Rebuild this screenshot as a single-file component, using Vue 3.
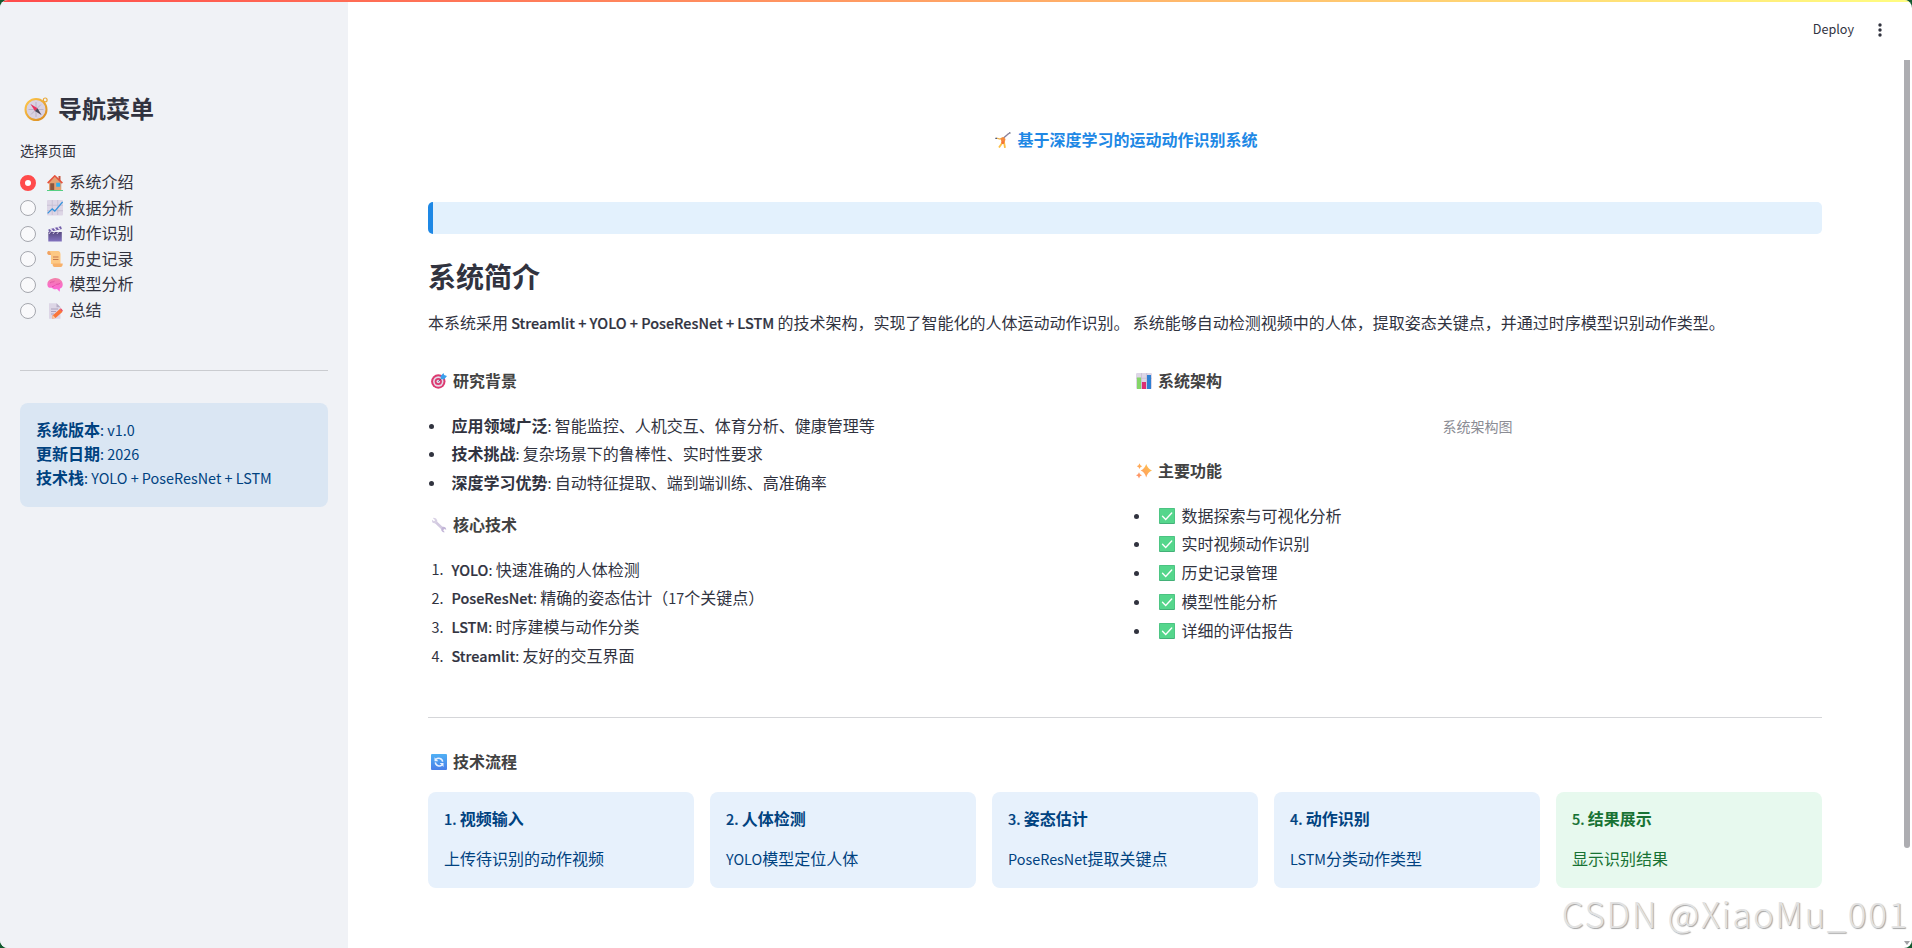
<template>
    <div class="app">
        <!-- icon sprite -->
        <svg class="sprite" width="0" height="0">
            <defs>
                <linearGradient id="gGold" x1="0" y1="0" x2="1" y2="1">
                    <stop offset="0" stop-color="#ffc94d" />
                    <stop offset="1" stop-color="#d98a1f" />
                </linearGradient>
                <linearGradient id="gPink" x1="0" y1="0" x2="0" y2="1">
                    <stop offset="0" stop-color="#f283a8" />
                    <stop offset="1" stop-color="#ff5fe0" />
                </linearGradient>
                <linearGradient id="gPurple" x1="0" y1="0" x2="0" y2="1">
                    <stop offset="0" stop-color="#584a80" />
                    <stop offset="1" stop-color="#8272c0" />
                </linearGradient>
                <linearGradient id="gSpark" x1="0" y1="1" x2="1" y2="0">
                    <stop offset="0" stop-color="#ff8a6a" />
                    <stop offset="1" stop-color="#ffc94a" />
                </linearGradient>
                <linearGradient id="gBlue" x1="0" y1="0" x2="0" y2="1">
                    <stop offset="0" stop-color="#4fb0f5" />
                    <stop offset="1" stop-color="#4a7fe8" />
                </linearGradient>
                <symbol id="compass" viewBox="0 0 24 24">
                    <circle cx="21.2" cy="2.9" r="1.9" fill="none" stroke="#e9a93a" stroke-width="1.2" />
                    <circle cx="12" cy="12.5" r="10.5" fill="#d9d2e2" stroke="url(#gGold)" stroke-width="2" />
                    <path d="M12 5v15M4.5 12.5h15M7 7.5l10 10M17 7.5l-10 10" stroke="#b4aac2" stroke-width=".8" />
                    <path d="M6.5 7l7 4.2-2.6 2.7z" fill="#e8325e" />
                    <path d="M17.5 18l-6.6-4.1 2.6-2.7z" fill="#4b4658" />
                </symbol>
                <symbol id="home" viewBox="0 0 16 16">
                    <path d="M11.5 1h2v5h-2z" fill="#c4553f" />
                    <path d="M2 7l6-5 6.3 5v8H2z" fill="#e3a274" />
                    <path d="M.7 8.2L7.8 1l7.6 7.2" fill="none" stroke="#e5533d" stroke-width="1.7" />
                    <path d="M3.2 8.3h4V15h-4z" fill="#8a563f" />
                    <path d="M9.2 7.8h4v4h-4z" fill="#2fb0ee" />
                    <path d="M0 15h16v1H0z" fill="#55cf83" />
                </symbol>
                <symbol id="trend" viewBox="0 0 16 16">
                    <rect width="16" height="15.5" rx="1" fill="#ddd6e6" />
                    <path d="M5.3 0v15M10.7 0v15M0 5.3h16M0 10.7h16" stroke="#c3bad0" stroke-width=".7" />
                    <path d="M.6 13.4l4.6-4.5 2.6 2.2L15.6 2" fill="none" stroke="#3694dc" stroke-width="1.3" />
                </symbol>
                <symbol id="clapper" viewBox="0 0 16 16">
                    <path d="M1.3 3.4L14 .3l.8 2.7L2 6z" fill="#6f5ca8" />
                    <path d="M3.4 3l2.2 2M7 2.1l2.2 2M10.7 1.2l2.2 2" stroke="#eee6f5" stroke-width="1.4" />
                    <path d="M1.3 6h13.5v9.6H1.3z" fill="url(#gPurple)" />
                    <path d="M3.5 6l-1.6 2M7.5 6L5.9 8M11.5 6L9.9 8" stroke="#d7cce9" stroke-width="1" />
                </symbol>
                <symbol id="scroll" viewBox="0 0 16 16">
                    <path d="M1.5 0h10Q13.5.5 13.5 3v10H4V4H2Q.3 3.5.3 2 .3.3 1.5 0z" fill="#fdc884" />
                    <path d="M1.5 0Q3.5.3 4 4H2Q.3 3.5.3 2 .3.3 1.5 0z" fill="#f0a264" />
                    <path d="M5.5 12.5h10.2Q15.8 15.8 13.6 16H7.5Q5.5 15.7 5.5 12.5z" fill="#f7b06a" />
                    <path d="M6 6h5.5M6 8.5h5.5" stroke="#c8794e" stroke-width="1" />
                </symbol>
                <symbol id="brain" viewBox="0 0 16 16">
                    <path d="M.4 8C0 5 2 2.500 5 1.800 8 .4 11.700 1.200 13.500 3c2 1.300 2.600 4 2 6-.4 1.800-1.500 2.300-2.600 2.600l-.2 3.100-2.700-2.800C7.500 12.600 6 12 4.700 10.700 2.500 11.300.6 10.300.4 8z" fill="url(#gPink)" />
                    <path d="M3 6c2-1.800 3-.4 4.500-1.800M8.500 8c1.500-1.600 3.500 0 4.700-2M5 9.500c1.200.3 2-.5 2.700-1.400" fill="none" stroke="#d9479b" stroke-width=".8" />
                </symbol>
                <symbol id="memo" viewBox="0 0 16 16">
                    <path d="M2 .3h7.500l4 4V15.700H2z" fill="#ddd6e6" />
                    <path d="M9.500.3v4h4" fill="#b8aec6" />
                    <path d="M4 6h7M4 8.500h5M4 11h3" stroke="#a79cb8" stroke-width=".9" />
                    <path d="M5 15.600l.9-3.300 7-6.300 2.700 2.700-7 6.300z" fill="#f9753a" />
                    <path d="M5 15.600l.9-3.300 2.600 2.600z" fill="#f8c9a0" />
                    <path d="M12.900 6l1-.8 2 2.200-.9 1z" fill="#e8405f" />
                </symbol>
                <symbol id="cartwheel" viewBox="0 0 16 16">
                    <path d="M1.5 6.2L5 7l3-1.5" fill="none" stroke="#f0b34e" stroke-width="1.2" />
                    <path d="M.3 6.300h1.700M14 .8l1.500.3" stroke="#555a75" stroke-width="1.2" />
                    <path d="M8.500 6L14 1.300" stroke="#8b819b" stroke-width="1.4" />
                    <path d="M5.500 6.500l3-1.500 2 2-1 4.500-2.500.5z" fill="#f58a3e" />
                    <path d="M7.500 10.500L4 15.500M9 10l1 5.800" stroke="#fbbf45" stroke-width="1.8" />
                    <circle cx="7.800" cy="10.500" r="1.500" fill="#f4743b" />
                </symbol>
                <symbol id="target" viewBox="0 0 16 16">
                    <circle cx="7.3" cy="8.5" r="7.2" fill="#dc3a70" />
                    <circle cx="7.3" cy="8.5" r="5.2" fill="#e6d9e8" />
                    <circle cx="7.3" cy="8.5" r="3.6" fill="#dc3a70" />
                    <circle cx="7.3" cy="8.5" r="1.8" fill="#e6d9e8" />
                    <path d="M7.3 8.5L12 4" stroke="#5b4b78" stroke-width="1" />
                    <path d="M9.5 3.2L12.4.1l.8 2 2.8.9L13 6.500l-3-.6z" fill="#3b9fec" />
                </symbol>
                <symbol id="wrench" viewBox="0 0 16 16">
                    <path d="M3.500 4L12.500 12.500" stroke="#d2c9e0" stroke-width="2.6" />
                    <path d="M1.800.9L4.200 3.200 3.300 4.400 1 2.800Q.6 6.300 3.500 6.300 6.500 6.500 6.300 3.500 5.500.3 1.800.9z" fill="#d8d0e4" />
                    <path d="M11.500 9.800Q15 9.300 15.300 12.800L13 12l-.8 1.200 1.600 2.100Q10.500 15.500 10.200 12.500z" fill="#c3b6d8" />
                </symbol>
                <symbol id="bars" viewBox="0 0 16 16">
                    <rect width="16" height="16" rx="1.2" fill="#ddd6e6" />
                    <path d="M5.500 0v16M10.700 0v16M0 5.300h16" stroke="#c3bad0" stroke-width=".7" />
                    <path d="M1 4.500h4V16H1z" fill="#85d668" />
                    <path d="M6 9h4v7H6z" fill="#dc2f73" />
                    <path d="M11 2h4v14h-4z" fill="#2f7fd3" />
                </symbol>
                <symbol id="sparkles" viewBox="0 0 16 16">
                    <path d="M10.200 1q1.500 4.700 5.800 6.500-4.300 1.700-5.800 7-1.500-5.300-5.500-7 4-1.700 5.500-6.500zM3.500.3q.5 2.400 2.700 2.900-2.200.5-2.700 2.800Q3 3.700.8 3.200 3 2.700 3.500.3zM3 9.300q.5 2.300 3 2.900-2.500.6-3 3.300-.5-2.700-3-3.300 2.500-.6 3-2.900z" fill="url(#gSpark)" />
                </symbol>
                <symbol id="check" viewBox="0 0 16 16">
                    <rect width="16" height="16" rx="1" fill="#43b078" />
                    <rect x=".4" y=".5" width="15.2" height="14.5" rx=".8" fill="#55d68c" />
                    <path d="M3.500 8.300l3.200 3.200 6-6.500" fill="none" stroke="#fff" stroke-width="1.4" stroke-linecap="round" />
                </symbol>
                <symbol id="cycle" viewBox="0 0 16 16">
                    <rect width="16" height="16" rx="1" fill="url(#gBlue)" />
                    <path d="M5 5.300c2-2 6.400-1.200 6.600 2.500M11 11c-2 1.800-6.300 1.200-6.600-2.600" fill="none" stroke="#e9f1ff" stroke-width="1.5" />
                    <path d="M3.500 3.300v3.900h3.800zM12.500 12.900V9H8.700z" fill="#e9f1ff" />
                </symbol>
            </defs>
        </svg>

        <aside class="sidebar">
            <h1><svg class="compass"><use href="#compass" /></svg>导航菜单</h1>
            <div class="label">选择页面</div>
            <div class="menu">
                <div v-for="item in pages" :key="item.text" class="menu-item">
                    <span class="radio" :class="{ active: item.text === current }"></span>
                    <svg class="icon"><use :href="'#' + item.icon" /></svg>
                    <span class="text">{{ item.text }}</span>
                </div>
            </div>
            <hr />
            <div class="info">
                <div v-for="row in info" :key="row.name">
                    <b>{{ row.name }}</b><Mixed :text="': ' + row.value" />
                </div>
            </div>
        </aside>

        <main class="main">
            <header class="toolbar">
                <span class="en deploy">Deploy</span>
                <svg width="4" height="14" viewBox="0 0 4 14" fill="#31333f">
                    <circle cx="2" cy="2" r="1.7" />
                    <circle cx="2" cy="7" r="1.7" />
                    <circle cx="2" cy="12" r="1.7" />
                </svg>
            </header>

            <div class="content">
                <div class="title"><svg class="icon"><use href="#cartwheel" /></svg>基于深度学习的运动动作识别系统</div>
                <div class="banner"></div>

                <h2>系统简介</h2>
                <p class="intro">本系统采用<Mixed text=" Streamlit + YOLO + PoseResNet + LSTM " semi />的技术架构，实现了智能化的人体运动动作识别。<Mixed text=" " />系统能够自动检测视频中的人体，提取姿态关键点，并通过时序模型识别动作类型。</p>

                <div class="columns">
                    <div>
                        <h3><svg class="icon"><use href="#target" /></svg>研究背景</h3>
                        <ul>
                            <li v-for="item in background" :key="item.name">
                                <i class="dot"></i>
                                <span><b>{{ item.name }}</b><Mixed :text="': ' + item.text" /></span>
                            </li>
                        </ul>
                        <h3 class="second"><svg class="icon"><use href="#wrench" /></svg>核心技术</h3>
                        <ul>
                            <li v-for="(item, index) in techs" :key="item.name">
                                <i class="num en">{{ index + 1 }}.</i>
                                <span><Mixed :text="item.name" semi /><Mixed :text="': ' + item.text" /></span>
                            </li>
                        </ul>
                    </div>
                    <div>
                        <h3><svg class="icon"><use href="#bars" /></svg>系统架构</h3>
                        <div class="caption">系统架构图</div>
                        <h3><svg class="icon"><use href="#sparkles" /></svg>主要功能</h3>
                        <ul class="features">
                            <li v-for="item in features" :key="item">
                                <i class="dot"></i>
                                <svg class="icon"><use href="#check" /></svg>
                                <span>{{ item }}</span>
                            </li>
                        </ul>
                    </div>
                </div>

                <hr />

                <h3><svg class="icon"><use href="#cycle" /></svg>技术流程</h3>
                <div class="steps">
                    <div v-for="(step, index) in steps" :key="step.name" class="step" :class="{ done: step.done }">
                        <div><Mixed :text="index + 1 + '. '" semi /><b>{{ step.name }}</b></div>
                        <div><Mixed :text="step.text" /></div>
                    </div>
                </div>
            </div>
        </main>

        <div class="decoration"></div>
        <div class="scrollbar"></div>
        <div class="scroll-arrow"></div>
        <div class="watermark">CSDN @XiaoMu_001</div>
    </div>
</template>

<script setup>
import { h, ref } from 'vue'

// wraps latin runs so they get their own size next to the chinese text
const Mixed = (props) => props.text
    .split(/([\x20-\x7e]+)/)
    .filter(Boolean)
    .map(part => /^[\x20-\x7e]/.test(part)
        ? h('span', { class: props.semi ? 'en semi' : 'en' }, part)
        : part)
Mixed.props = { text: String, semi: Boolean }

const current = ref('系统介绍')

const pages = [
    { icon: 'home', text: '系统介绍' },
    { icon: 'trend', text: '数据分析' },
    { icon: 'clapper', text: '动作识别' },
    { icon: 'scroll', text: '历史记录' },
    { icon: 'brain', text: '模型分析' },
    { icon: 'memo', text: '总结' }
]

const info = [
    { name: '系统版本', value: 'v1.0' },
    { name: '更新日期', value: '2026' },
    { name: '技术栈', value: 'YOLO + PoseResNet + LSTM' }
]

const background = [
    { name: '应用领域广泛', text: '智能监控、人机交互、体育分析、健康管理等' },
    { name: '技术挑战', text: '复杂场景下的鲁棒性、实时性要求' },
    { name: '深度学习优势', text: '自动特征提取、端到端训练、高准确率' }
]

const techs = [
    { name: 'YOLO', text: '快速准确的人体检测' },
    { name: 'PoseResNet', text: '精确的姿态估计（17个关键点）' },
    { name: 'LSTM', text: '时序建模与动作分类' },
    { name: 'Streamlit', text: '友好的交互界面' }
]

const features = ['数据探索与可视化分析', '实时视频动作识别', '历史记录管理', '模型性能分析', '详细的评估报告']

const steps = [
    { name: '视频输入', text: '上传待识别的动作视频' },
    { name: '人体检测', text: 'YOLO模型定位人体' },
    { name: '姿态估计', text: 'PoseResNet提取关键点' },
    { name: '动作识别', text: 'LSTM分类动作类型' },
    { name: '结果展示', text: '显示识别结果', done: true }
]
</script>

<style>
html,
body {
    margin: 0;
    background: #12592f;
    overflow: hidden;
}
</style>

<style scoped>
.app {
    position: relative;
    display: flex;
    height: 948px;
    border-radius: 8px;
    overflow: hidden;
    background: #fff;
    color: #31333f;
    font-family: "Noto Sans CJK SC", sans-serif;
    font-size: 16px;
    line-height: 24px;
}

.sprite {
    position: absolute;
}

.app :deep(.en) {
    font-size: 14.4px;
    line-height: 1;
    white-space: pre-wrap;
}

.app :deep(.semi) {
    font-weight: 500;
    -webkit-text-stroke: 0.2px currentColor;
}

.icon {
    width: 16px;
    height: 16px;
    flex: none;
}

hr {
    width: 100%;
    height: 1px;
    margin: 0;
    border: 0;
    background: #d5d6d9;
}

/* sidebar */
.sidebar {
    box-sizing: border-box;
    width: 348px;
    flex: none;
    padding: 91px 20px 0;
    background: #f0f2f6;
}

.sidebar h1 {
    display: flex;
    align-items: center;
    gap: 10px;
    margin: 0 0 0 4px;
    font-size: 24px;
    line-height: 34px;
}

.compass {
    width: 24px;
    height: 24px;
    margin-top: 2px;
}

.label {
    margin-top: 15px;
    font-size: 14px;
    line-height: 20px;
}

.menu {
    margin-top: 9.8px;
}

.menu-item {
    display: flex;
    align-items: center;
    height: 25.6px;
}

.menu-item .icon {
    margin: 0 6.6px 0 11px;
}

.menu-item .text {
    margin-top: -3px;
}

.radio {
    box-sizing: border-box;
    width: 16px;
    height: 16px;
    border: 1px solid #a5a7ae;
    border-radius: 50%;
    background: #f9f9fb;
}

.radio.active {
    border: 5px solid #ff4b4b;
    background: #fff;
}

.sidebar hr {
    margin-top: 46.6px;
    background: #caccd0;
}

.info {
    box-sizing: border-box;
    height: 104px;
    margin-top: 32px;
    padding: 14px 16px;
    border-radius: 8px;
    background: #dae6f3;
    color: #004280;
}

/* main */
.main {
    flex: 1;
}

.toolbar {
    display: flex;
    align-items: center;
    justify-content: flex-end;
    gap: 24px;
    height: 60px;
    padding-right: 30px;
}

.app .deploy {
    margin-top: -1px;
    font-size: 12.6px;
}

.content {
    padding: 67px 90px 0 80px;
}

.title {
    display: flex;
    justify-content: center;
    gap: 6px;
    align-items: center;
    padding-left: 3px;
    font-weight: 700;
    color: #1e88e5;
}

.title .icon {
    margin-top: 2px;
}

.banner {
    height: 32px;
    margin-top: 51px;
    box-sizing: border-box;
    border-left: 5px solid #1e88e5;
    border-radius: 5px;
    background: #e3f1fd;
}

h2 {
    margin: 25px 0 0;
    font-size: 28px;
    line-height: 34px;
}

.intro {
    margin: 16px 0 0;
    line-height: 26px;
    white-space: nowrap;
}

h3 {
    display: flex;
    align-items: center;
    gap: 6px;
    margin: 0;
    padding-left: 3px;
    font-size: 16px;
    line-height: 24px;
    color: #424242;
}

h3 .icon {
    margin-top: 2px;
}

.columns {
    display: grid;
    grid-template-columns: 1fr 1fr;
    gap: 16px;
    margin-top: 33px;
}

.second {
    margin-top: 15.4px;
}

ul {
    margin: 18.2px 0 0;
    padding: 0;
    list-style: none;
}

li {
    display: flex;
    align-items: center;
    height: 28.8px;
}

.dot {
    width: 5px;
    height: 5px;
    margin: 3px 17.4px 0 1px;
    border-radius: 50%;
    background: #31333f;
}

.num {
    width: 20px;
    margin-top: 2px;
    padding-left: 3.5px;
    font-style: normal;
}

.features .icon {
    margin: 2px 6.6px 0 2.6px;
}

.caption {
    margin: 24px 0 22px;
    font-size: 14px;
    line-height: 20px;
    text-align: center;
    color: #8b8c94;
}

.content hr {
    margin: 47.4px 0 31px;
}

.steps {
    display: grid;
    grid-template-columns: repeat(5, 1fr);
    gap: 16px;
    margin-top: 19.2px;
}

.step {
    box-sizing: border-box;
    display: flex;
    flex-direction: column;
    gap: 16px;
    height: 96px;
    padding: 14px 16px;
    border-radius: 8px;
    background: #e7f1fc;
    color: #004280;
}

.step.done {
    background: #e7f9ee;
    color: #177233;
}

/* overlays */
.decoration {
    position: absolute;
    inset: 0 0 auto;
    height: 2px;
    background: linear-gradient(90deg, #ff4b4b, #fffd80);
}

.scrollbar {
    position: absolute;
    top: 60px;
    right: 2px;
    width: 6px;
    height: 788px;
    border-radius: 0 0 3px 3px;
    background: #adadb1;
}

.scroll-arrow {
    position: absolute;
    right: 2px;
    bottom: 3px;
    border: 3px solid transparent;
    border-top: 4px solid #a0a0a4;
    border-bottom: 0;
}

.watermark {
    position: absolute;
    right: 3px;
    bottom: 10px;
    font-size: 35px;
    font-weight: 300;
    line-height: 50px;
    letter-spacing: 1.65px;
    color: #e2e2e2;
    text-shadow: 1px 1px 1px #a4a4a4;
}
</style>
